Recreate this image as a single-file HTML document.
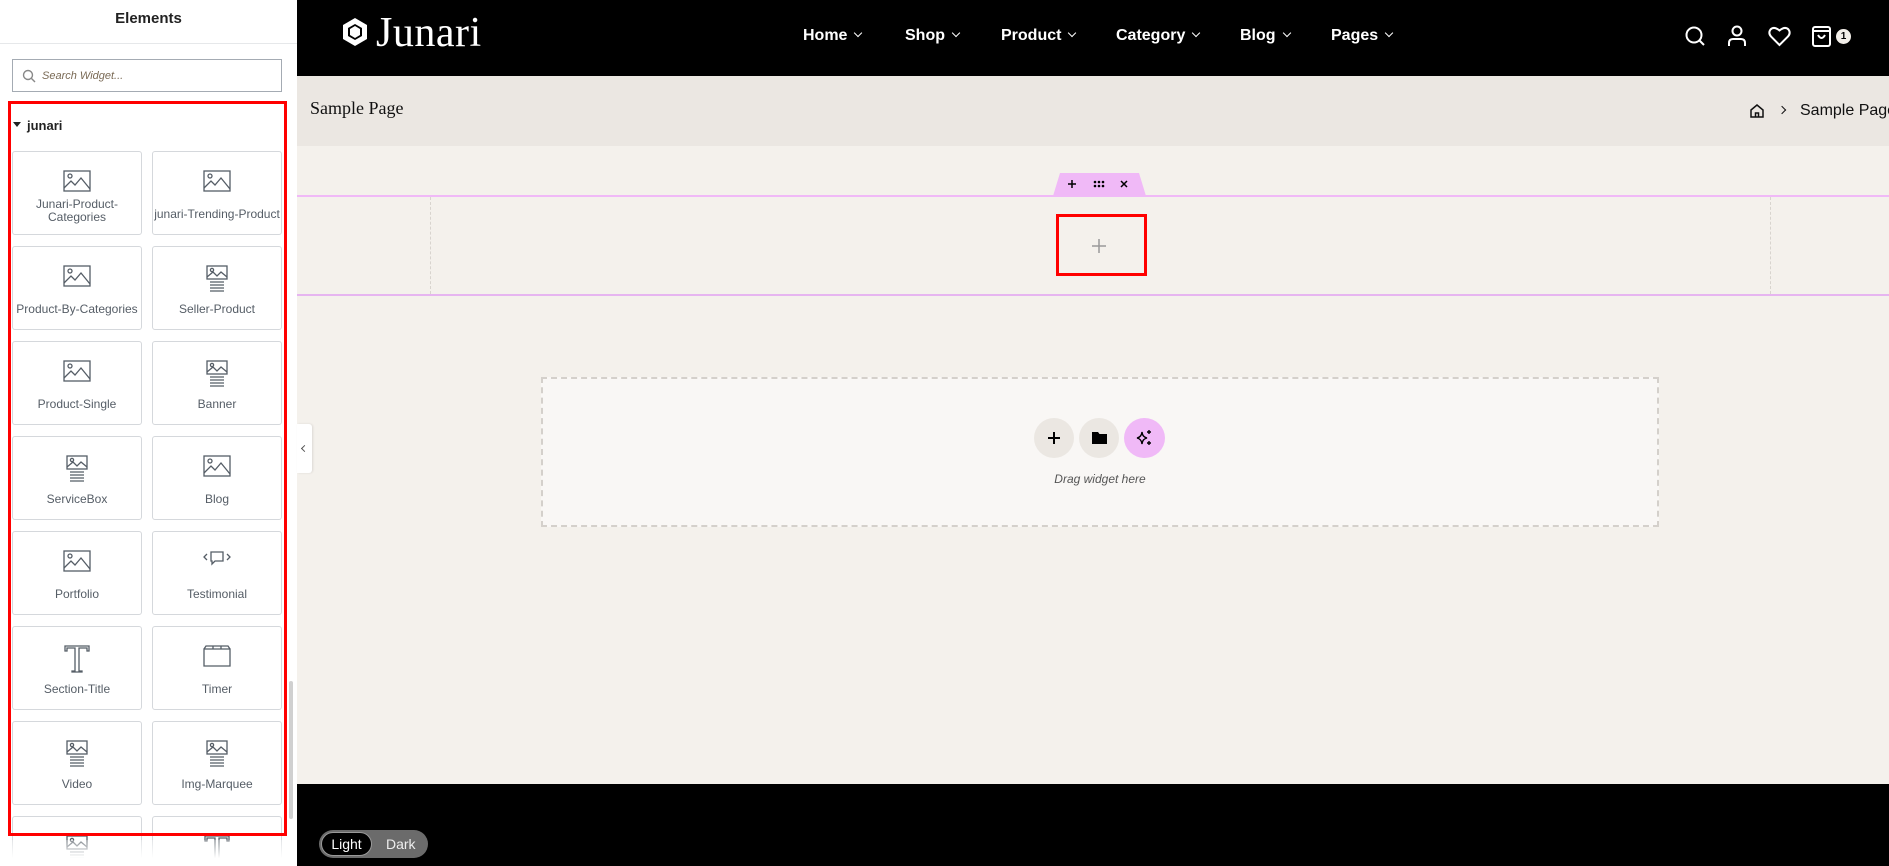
<!DOCTYPE html>
<html><head><meta charset="utf-8"><style>
*{box-sizing:border-box;margin:0;padding:0}
html,body{width:1889px;height:866px;overflow:hidden}
body{position:relative;background:#f4f1ec;font-family:"Liberation Sans",sans-serif}
.abs{position:absolute}
#side{left:0;top:0;width:297px;height:866px;background:#fff;overflow:hidden}
.card{position:absolute;width:130px;height:84px;border:1px solid #d5d8dc;border-radius:3px;background:#fff;text-align:center;font-size:12px;color:#555d66}
.card svg{position:absolute;left:50%;top:18px;transform:translateX(-50%)}
.card .lb{position:absolute;left:0;right:0;top:52px;line-height:13px}
.nav{color:#fff;font-size:16px;font-weight:bold;top:27px}
.nav:after{content:"";display:inline-block;width:5px;height:5px;border-right:1.6px solid #fff;border-bottom:1.6px solid #fff;transform:rotate(45deg);margin-left:8px;position:relative;top:-4px}
</style></head><body>
<div id="side" class="abs">
 <div class="abs" style="left:0;width:297px;top:10px;text-align:center;font-size:15px;font-weight:bold;color:#222">Elements</div>
 <div class="abs" style="left:0;top:43px;width:297px;height:1px;background:#e6e8ea"></div>
 <div class="abs" style="left:12px;top:59px;width:270px;height:33px;border:1px solid #a4abb3"></div>
 <svg class="abs" style="left:22px;top:69px" width="14" height="14" viewBox="0 0 14 14"><circle cx="6" cy="6" r="4.5" fill="none" stroke="#888" stroke-width="1.4"/><path d="M9.5 9.5L13 13" stroke="#888" stroke-width="1.4"/></svg>
 <div class="abs" style="left:42px;top:70px;font-size:11px;font-style:italic;color:#7a6a55">Search Widget...</div>
 <div class="abs" style="left:13px;top:122px;width:0;height:0;border-left:4px solid transparent;border-right:4px solid transparent;border-top:5px solid #222"></div>
 <div class="abs" style="left:27px;top:118px;font-size:13px;font-weight:bold;color:#222">junari</div>
 <div id="cards"></div>
 <div class="abs" style="left:289px;top:681px;width:4px;height:138px;background:#d0d0d0;border-radius:2px"></div>
 <div class="abs" style="left:8px;top:101px;width:279px;height:735px;border:3px solid #f00"></div>
 <div class="abs" style="left:0;top:840px;width:297px;height:26px;background:linear-gradient(rgba(255,255,255,0.3),#fff 70%)"></div>
</div>
<div class="abs" style="left:297px;top:424px;width:15px;height:49px;background:#fff;border-radius:0 3px 3px 0;box-shadow:1px 0 2px rgba(0,0,0,.1)"></div>
<div class="abs" style="left:302px;top:446px;width:5px;height:5px;border-left:1.3px solid #555;border-bottom:1.3px solid #555;transform:rotate(45deg)"></div>

<div class="abs" style="left:297px;top:0;width:1592px;height:76px;background:#000"></div>
<svg class="abs" style="left:341px;top:17px" width="28" height="30" viewBox="0 0 28 30"><path d="M14 1L26 8V22L14 29L2 22V8Z" fill="#fff"/><path d="M14 7L21 11V19L14 23L7 19V11Z" fill="#000"/><path d="M14 9L19 12V18L14 21L9 18V12Z" fill="#fff"/></svg>
<div class="abs" style="left:376px;top:9px;font-family:'Liberation Serif',serif;font-size:42px;color:#fff;letter-spacing:0.5px">Junari</div>
<div class="abs nav" style="left:803px">Home</div>
<div class="abs nav" style="left:905px">Shop</div>
<div class="abs nav" style="left:1001px">Product</div>
<div class="abs nav" style="left:1116px">Category</div>
<div class="abs nav" style="left:1240px">Blog</div>
<div class="abs nav" style="left:1331px">Pages</div>
<svg class="abs" style="left:1684px;top:25px" width="22" height="22" viewBox="0 0 22 22" fill="none" stroke="#fff" stroke-width="2"><circle cx="10" cy="10" r="7.5"/><path d="M15.5 15.5L20 20"/></svg>
<svg class="abs" style="left:1727px;top:25px" width="20" height="22" viewBox="0 0 20 22" fill="none" stroke="#fff" stroke-width="2"><circle cx="10" cy="6" r="4.5"/><path d="M2 21V18Q2 14 6 14H14Q18 14 18 18V21"/></svg>
<svg class="abs" style="left:1768px;top:26px" width="23" height="21" viewBox="0 0 23 21" fill="none" stroke="#fff" stroke-width="2"><path d="M11.5 19L3 10.5Q0 7 2.5 3.5Q6 0 11.5 4.5Q17 0 20.5 3.5Q23 7 20 10.5Z"/></svg>
<svg class="abs" style="left:1811px;top:24px" width="21" height="24" viewBox="0 0 21 24" fill="none" stroke="#fff" stroke-width="2"><rect x="2" y="3" width="17" height="19" rx="2"/><path d="M2 7H19M7 11Q10.5 17 14 11"/></svg>
<div class="abs" style="left:1836px;top:29px;width:15px;height:15px;border-radius:50%;background:#f3efe9;color:#000;font-size:10px;text-align:center;line-height:15px;font-weight:bold">1</div>

<div class="abs" style="left:297px;top:76px;width:1592px;height:70px;background:#ebe7e2"></div>
<div class="abs" style="left:310px;top:98px;font-family:'Liberation Serif',serif;font-size:18px;color:#111">Sample Page</div>
<svg class="abs" style="left:1749px;top:103px" width="16" height="16" viewBox="0 0 16 16" fill="none" stroke="#111" stroke-width="1.5"><path d="M2 7L8 2L14 7V14H2Z"/><path d="M6.5 14V10H9.5V14"/></svg>
<div class="abs" style="left:1779px;top:107px;width:6px;height:6px;border-right:1.5px solid #111;border-top:1.5px solid #111;transform:rotate(45deg)"></div>
<div class="abs" style="left:1800px;top:102px;font-size:16px;color:#111;white-space:nowrap">Sample Page</div>

<div class="abs" style="left:297px;top:195px;width:1592px;height:101px;border-top:2px solid #f0b9f7;border-bottom:2px solid #e6b5f0"></div>
<div class="abs" style="left:430px;top:197px;height:97px;border-left:1px dashed #d8d4ce"></div>
<div class="abs" style="left:1770px;top:197px;height:97px;border-left:1px dashed #d8d4ce"></div>
<svg class="abs" style="left:1053px;top:173px" width="93" height="23" viewBox="0 0 93 23"><path d="M7 0H86L93 23H0Z" fill="#f0b9f7"/><path d="M19 7V15M15 11H23" stroke="#000" stroke-width="1.5"/><g fill="#000"><circle cx="42" cy="9" r="1.3"/><circle cx="46" cy="9" r="1.3"/><circle cx="50" cy="9" r="1.3"/><circle cx="42" cy="13" r="1.3"/><circle cx="46" cy="13" r="1.3"/><circle cx="50" cy="13" r="1.3"/></g><path d="M68 8L74 14M74 8L68 14" stroke="#000" stroke-width="1.5"/></svg>
<div class="abs" style="left:1056px;top:214px;width:91px;height:62px;border:3px solid #f00"></div>
<svg class="abs" style="left:1091px;top:238px" width="16" height="16" viewBox="0 0 16 16"><path d="M8 1V15M1 8H15" stroke="#999" stroke-width="1.5"/></svg>

<div class="abs" style="left:541px;top:377px;width:1118px;height:150px;border:2px dashed #d4d0cb;background:#f9f7f5"></div>
<div class="abs" style="left:1034px;top:418px;width:40px;height:40px;border-radius:50%;background:#ebe7e2"></div>
<svg class="abs" style="left:1046px;top:430px" width="16" height="16" viewBox="0 0 16 16"><path d="M8 2V14M2 8H14" stroke="#000" stroke-width="2"/></svg>
<div class="abs" style="left:1079px;top:418px;width:40px;height:40px;border-radius:50%;background:#ebe7e2"></div>
<svg class="abs" style="left:1092px;top:431px" width="15" height="13" viewBox="0 0 15 13"><path d="M0 1H6L7.5 3H15V13H0Z" fill="#000"/></svg>
<div class="abs" style="left:1124px;top:418px;width:41px;height:40px;border-radius:50%;background:#f0b9f7"></div>
<svg class="abs" style="left:1134px;top:428px" width="20" height="20" viewBox="0 0 20 20"><path d="M8 4Q8.5 9 13 10Q8.5 11 8 16Q7.5 11 3 10Q7.5 9 8 4Z" fill="none" stroke="#000" stroke-width="1.4"/><path d="M15 2V6M13 4H17M15 13V17M13 15H17" stroke="#000" stroke-width="1.4"/></svg>
<div class="abs" style="left:541px;top:472px;width:1118px;text-align:center;font-size:12px;font-style:italic;color:#555">Drag widget here</div>

<div class="abs" style="left:297px;top:784px;width:1592px;height:82px;background:#000"></div>
<div class="abs" style="left:319px;top:830px;width:109px;height:28px;border-radius:14px;background:#6b6b6b"></div>
<div class="abs" style="left:321px;top:832px;width:51px;height:24px;border-radius:12px;background:#000;border:1px solid #999;color:#fff;font-size:14px;text-align:center;line-height:22px">Light</div>
<div class="abs" style="left:386px;top:836px;color:#eee;font-size:14px">Dark</div>

<script>
var L=[["Junari-Product-<br>Categories","img"],["junari-Trending-Product","img"],["Product-By-Categories","img"],["Seller-Product","imgl"],["Product-Single","img"],["Banner","imgl"],["ServiceBox","imgl"],["Blog","img"],["Portfolio","img"],["Testimonial","tes"],["Section-Title","T"],["Timer","tim"],["Video","imgl"],["Img-Marquee","imgl"],["","imgl"],["","T"]];
var ic={img:'<svg width="28" height="22" viewBox="0 0 28 22" fill="none" stroke="#555d66" stroke-width="1.3"><rect x="1" y="1" width="26" height="20"/><circle cx="7" cy="6" r="2"/><path d="M1 18L8 11L12 15L18 8L27 19"/></svg>',
imgl:'<svg width="22" height="28" viewBox="0 0 22 28" fill="none" stroke="#555d66" stroke-width="1.3"><rect x="1" y="1" width="20" height="13"/><circle cx="6" cy="5" r="1.6"/><path d="M1 12L7 7L11 11L15 7L21 12M4 17H18M4 20H18M4 23H18M4 26H18"/></svg>',
T:'<svg width="26" height="28" viewBox="0 0 26 28" fill="none" stroke="#555d66" stroke-width="1.3"><path d="M1 1H25V6H23V3H15V26H18V27H8V26H11V3H3V6H1Z"/></svg>',
tes:'<svg width="28" height="16" viewBox="0 0 28 16" fill="none" stroke="#555d66" stroke-width="1.3"><path d="M4 4L1 7L4 10M24 4L27 7L24 10"/><path d="M8 2H20V11H12L9 14V11H8Z"/></svg>',
tim:'<svg width="28" height="22" viewBox="0 0 28 22" fill="none" stroke="#555d66" stroke-width="1.3"><path d="M1 4H27V21H1Z M1 4L3 1H25L27 4M10 1V4M18 1V4"/></svg>'};
var h='';for(var i=0;i<L.length;i++){var c=i%2,r=Math.floor(i/2);var x=c?152:12,y=151+r*95;h+='<div class="card" style="left:'+x+'px;top:'+y+'px">'+ic[L[i][1]]+'<div class="lb" style="'+(L[i][0].indexOf('<br>')>0?'top:46px':'top:56px')+'">'+L[i][0]+'</div></div>';}
document.getElementById('cards').innerHTML=h;
</script>
</body></html>
